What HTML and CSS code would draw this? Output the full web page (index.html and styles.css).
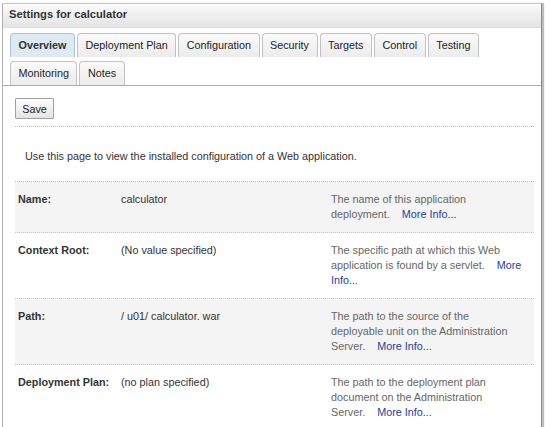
FILE: index.html
```html
<!DOCTYPE html>
<html>
<head>
<meta charset="utf-8">
<link rel="stylesheet" href="styles.css">
</head>
<body>
<div class="panel">
  <div class="panel-header">Settings for calculator</div>
  <div class="tabs">
    <div class="tab-row">
      <span class="tab active">Overview</span>
      <span class="tab">Deployment Plan</span>
      <span class="tab">Configuration</span>
      <span class="tab">Security</span>
      <span class="tab">Targets</span>
      <span class="tab">Control</span>
      <span class="tab">Testing</span>
    </div>
    <div class="tab-row">
      <span class="tab">Monitoring</span>
      <span class="tab">Notes</span>
    </div>
  </div>
  <div class="content">
    <div class="toolbar"><button class="btn">Save</button></div>
    <p class="intro">Use this page to view the installed configuration of a Web application.</p>
    <div class="props">
      <div class="row shade">
        <div class="label">Name:</div>
        <div class="value">calculator</div>
        <div class="desc">The name of this application deployment.&nbsp;&nbsp;&nbsp; <a href="#">More Info...</a></div>
      </div>
      <div class="row">
        <div class="label">Context Root:</div>
        <div class="value">(No value specified)</div>
        <div class="desc">The specific path at which this Web application is found by a servlet.&nbsp;&nbsp;&nbsp; <a href="#">More Info...</a></div>
      </div>
      <div class="row shade">
        <div class="label">Path:</div>
        <div class="value">/ u01/ calculator. war</div>
        <div class="desc">The path to the source of the deployable unit on the Administration Server.&nbsp;&nbsp;&nbsp; <a href="#">More Info...</a></div>
      </div>
      <div class="row">
        <div class="label">Deployment Plan:</div>
        <div class="value">(no plan specified)</div>
        <div class="desc">The path to the deployment plan document on the Administration Server.&nbsp;&nbsp;&nbsp; <a href="#">More Info...</a></div>
      </div>
    </div>
  </div>
</div>
</body>
</html>
```
FILE: styles.css
```css
html, body {
  margin: 0;
  padding: 0;
  background: #fff;
  font-family: "Liberation Sans", Arial, sans-serif;
  font-size: 10.8px;
  color: #333;
}
.panel {
  margin: 3px 0 0 2px;
  width: 540px;
  height: 440px;
  border-left: 1px solid #b0b0b0;
  border-top: 1px solid #c8c8c8;
  border-right: 1px solid #8a8a8a;
  box-shadow: 2px 0 1px #bdbdbd;
  box-sizing: border-box;
}
.panel-header {
  height: 23px;
  line-height: 21px;
  padding-left: 6px;
  font-weight: bold;
  font-size: 11.2px;
  color: #333;
  background: linear-gradient(#fbfbfb, #e4e4e4);
  border-bottom: 1px solid #dcdcdc;
}
.tabs {
  padding: 5px 0 0 7px;
  border-bottom: 1px solid #8fb3cf;
}
.tab-row {
  display: flex;
  gap: 2px;
  margin-bottom: 4px;
}
.tab-row:last-child { margin-bottom: 0; }
.tab {
  display: block;
  height: 23px;
  line-height: 22px;
  padding: 0 7.5px;
  border: 1px solid #c2c2c2;
  border-bottom: none;
  border-radius: 4px 4px 0 0;
  background: linear-gradient(#fafafa, #ececec);
  color: #222;
}
.tab.active {
  background: #dde9f3;
  border-color: #a9c2d8;
  font-weight: bold;
  color: #333;
}
.content {
  padding: 9px 7px 0 12px;
}
.toolbar {
  padding-top: 3px;
  padding-bottom: 7px;
  border-bottom: 1px dotted #bbb;
}
.btn {
  display: block;
  font-family: "Liberation Sans", Arial, sans-serif;
  font-size: 10.8px;
  height: 21px;
  width: 39px;
  padding: 0;
  border: 1px solid #a0a0a0;
  background: linear-gradient(#ffffff, #e3e3e3);
  color: #222;
  border-radius: 1px;
}
.intro {
  margin: 0;
  padding: 23px 0 0 10px;
  height: 31px;
  border-bottom: 1px dotted #bbb;
  color: #333;
}
.row {
  display: grid;
  grid-template-columns: 103px 210px 1fr;
  padding: 10px 10px 10px 3px;
  border-bottom: 1px dotted #c4c4c4;
  line-height: 15px;
}
.row.shade { background: #f4f4f4; }
.row:last-child { border-bottom: none; }
.label { font-weight: bold; color: #333; }
.value { color: #333; }
.desc { color: #666; }
.desc a { color: #1f3f9a; text-decoration: none; }
```
